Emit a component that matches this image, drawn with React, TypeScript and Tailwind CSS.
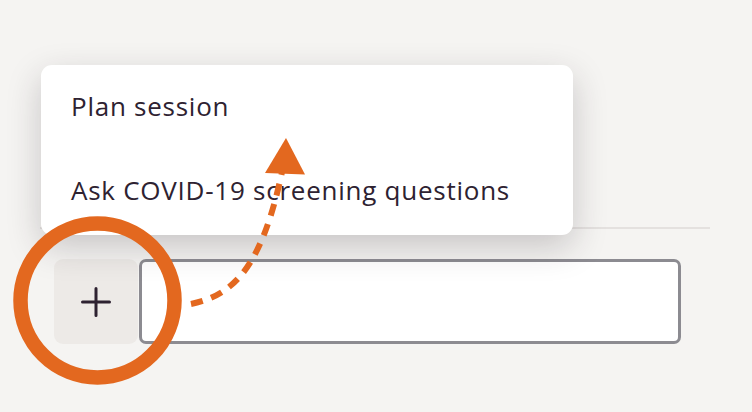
import React from 'react'

const menuItems = ['Plan session', 'Ask COVID-19 screening questions']

// orange callout drawn over the composer
const Annotation = () => (
  <svg className="absolute inset-0 pointer-events-none z-20" width="752" height="412" viewBox="0 0 752 412">
    <circle cx="97.5" cy="300.5" r="77" fill="none" stroke="#e3681f" strokeWidth="14.5" />
    <path
      d="M191,304 C235,295 262,265 282,172"
      fill="none"
      stroke="#e3681f"
      strokeWidth="6"
      strokeDasharray="12 9"
    />
    <polygon points="286,138 265,173 305,174.5" fill="#e3681f" />
  </svg>
)

export default function App() {
  return (
    <div
      className="relative w-[752px] h-[412px] overflow-hidden bg-[#f5f4f2] text-[#2e2231]"
      style={{ fontFamily: '"Open Sans", "Noto Sans", sans-serif' }}
    >
      {/* conversation panel */}
      <div className="flex h-[229px]">
        <div className="w-[40px] shrink-0" />
        <div className="w-[670px] border-b-2 border-[#e4e1df]" />
      </div>

      {/* composer */}
      <div className="flex gap-[1px] pl-[54px] pt-[30px]">
        <button className="w-[84px] h-[85px] rounded-[9px] bg-[#edeae7] flex items-center justify-center">
          <svg width="30" height="30" viewBox="0 0 30 30" stroke="#2e2231" strokeWidth="3" strokeLinecap="round">
            <path d="M15 1.5v27M1.5 15h27" />
          </svg>
        </button>
        <div className="w-[542px] h-[85px] rounded-[7px] border-[3px] border-[#8c8b91] bg-white" />
      </div>

      {/* popover menu */}
      <div className="absolute left-[41px] top-[65px] w-[532px] h-[170px] rounded-[11px] bg-white shadow-[0_12px_34px_rgba(40,30,40,0.22)] z-10 flex flex-col gap-[58px] pt-[28px] px-[30px]">
        {menuItems.map((item) => (
          <div key={item} className="h-[26px] text-[26px] tracking-[0.75px] leading-none whitespace-nowrap">
            {item}
          </div>
        ))}
      </div>

      <Annotation />
    </div>
  )
}
